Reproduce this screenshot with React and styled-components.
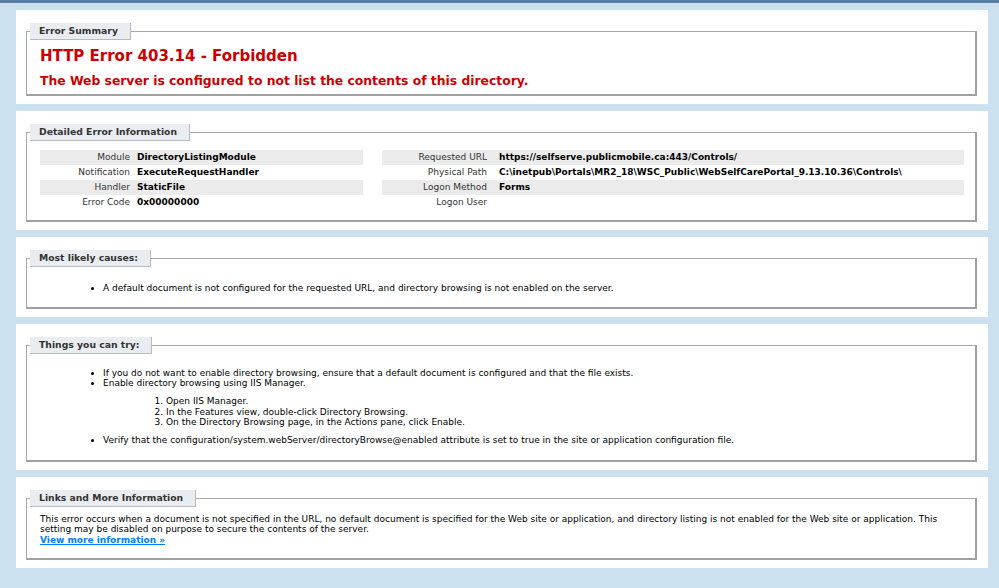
import styled, { createGlobalStyle } from "styled-components";

const GlobalStyle = createGlobalStyle`
  body {
    margin: 0;
    background: #cbe1ef;
    font-family: "DejaVu Sans", Verdana, sans-serif;
    font-size: 9px;
    color: #000;
  }
`;

const TopBar = styled.div`
  height: 3px;
  background: #5a7fa5;
`;

const Content = styled.div`
  padding: 7px 11px 0 16px;
  display: flex;
  flex-direction: column;
  gap: 7px;
`;

const Container = styled.div`
  background: #fff;
  padding: 13px 11px 8px 10px;
`;

const Fieldset = styled.fieldset`
  margin: 0;
  min-width: 0;
  padding: 0 11px ${(p) => p.$pb || 10}px 13px;
  border: 1px solid #a8a8a8;
  border-right: 2px solid #a0a0a0;
  border-bottom: 2px solid #a0a0a0;
`;

const Legend = styled.legend`
  margin-left: -10px;
  margin-bottom: ${(p) => p.$mb || 0}px;
  padding: 2px 12px 3px 9px;
  background: #e9edf1;
  border-right: 1px solid #b5bbc1;
  border-bottom: 1px solid #b5bbc1;
  color: #333;
  font-weight: bold;
  font-size: 9.25px;
`;

const Title = styled.h2`
  margin: 7px 0 0;
  color: #cc0000;
  font-size: 15px;
  line-height: 18px;
`;

const SubTitle = styled.h3`
  margin: 8px 0 0;
  color: #cc0000;
  font-size: 12.35px;
  line-height: 16px;
`;

const Details = styled.div`
  display: flex;
  gap: 19px;
  margin-top: 9px;
`;

const DetailCol = styled.div`
  flex: ${(p) => (p.$w ? `0 0 ${p.$w}px` : "1")};
`;

const Row = styled.div`
  display: grid;
  grid-template-columns: ${(p) => p.$label}px 1fr;
  column-gap: ${(p) => p.$gap}px;
  height: 15px;
  line-height: 15px;
  background: ${(p) => (p.$alt ? "#ebebeb" : "transparent")};
`;

const Label = styled.span`
  text-align: right;
  color: #333;
`;

const Value = styled.span`
  font-weight: bold;
  white-space: nowrap;
`;

const Bullets = styled.ul`
  margin: 0;
  padding: 0 0 0 63px;
  list-style: disc outside;
  line-height: 10.5px;
`;

const Steps = styled.ol`
  margin: 7.5px 0;
  padding-left: 63px;
  list-style: decimal outside;
`;

const Para = styled.p`
  margin: 0;
  line-height: 10.5px;
`;

const MoreLink = styled.a`
  color: #007eff;
  font-weight: bold;
  &:hover {
    text-decoration: none;
  }
`;

const left = [
  ["Module", "DirectoryListingModule"],
  ["Notification", "ExecuteRequestHandler"],
  ["Handler", "StaticFile"],
  ["Error Code", "0x00000000"],
];

const right = [
  ["Requested URL", "https://selfserve.publicmobile.ca:443/Controls/"],
  ["Physical Path", "C:\\inetpub\\Portals\\MR2_18\\WSC_Public\\WebSelfCarePortal_9.13.10.36\\Controls\\"],
  ["Logon Method", "Forms"],
  ["Logon User", ""],
];

export default function App() {
  return (
    <>
      <GlobalStyle />
      <TopBar />
      <Content>
        <Container>
          <Fieldset $pb={5}>
            <Legend>Error Summary</Legend>
            <Title>HTTP Error 403.14 - Forbidden</Title>
            <SubTitle>The Web server is configured to not list the contents of this directory.</SubTitle>
          </Fieldset>
        </Container>

        <Container>
          <Fieldset $pb={10}>
            <Legend>Detailed Error Information</Legend>
            <Details>
              <DetailCol $w={323}>
                {left.map(([k, v], i) => (
                  <Row key={k} $alt={i % 2 === 0} $label={90} $gap={7}>
                    <Label>{k}</Label>
                    <Value>{v}</Value>
                  </Row>
                ))}
              </DetailCol>
              <DetailCol>
                {right.map(([k, v], i) => (
                  <Row key={k} $alt={i % 2 === 0} $label={105} $gap={12}>
                    <Label>{k}</Label>
                    <Value>{v}</Value>
                  </Row>
                ))}
              </DetailCol>
            </Details>
          </Fieldset>
        </Container>

        <Container>
          <Fieldset $pb={13}>
            <Legend $mb={16}>Most likely causes:</Legend>
            <Bullets>
              <li>A default document is not configured for the requested URL, and directory browsing is not enabled on the server.</li>
            </Bullets>
          </Fieldset>
        </Container>

        <Container>
          <Fieldset $pb={14}>
            <Legend $mb={14}>Things you can try:</Legend>
            <Bullets>
              <li>If you do not want to enable directory browsing, ensure that a default document is configured and that the file exists.</li>
              <li>
                Enable directory browsing using IIS Manager.
                <Steps>
                  <li>Open IIS Manager.</li>
                  <li>In the Features view, double-click Directory Browsing.</li>
                  <li>On the Directory Browsing page, in the Actions pane, click Enable.</li>
                </Steps>
              </li>
              <li>Verify that the configuration/system.webServer/directoryBrowse@enabled attribute is set to true in the site or application configuration file.</li>
            </Bullets>
          </Fieldset>
        </Container>

        <Container>
          <Fieldset $pb={13}>
            <Legend $mb={7}>Links and More Information</Legend>
            <Para>
              This error occurs when a document is not specified in the URL, no default document is specified for the Web site or application, and directory listing is not enabled for the Web site or application. This setting may be disabled on purpose to secure the contents of the server.
            </Para>
            <Para>
              <MoreLink href="#">View more information »</MoreLink>
            </Para>
          </Fieldset>
        </Container>
      </Content>
    </>
  );
}
